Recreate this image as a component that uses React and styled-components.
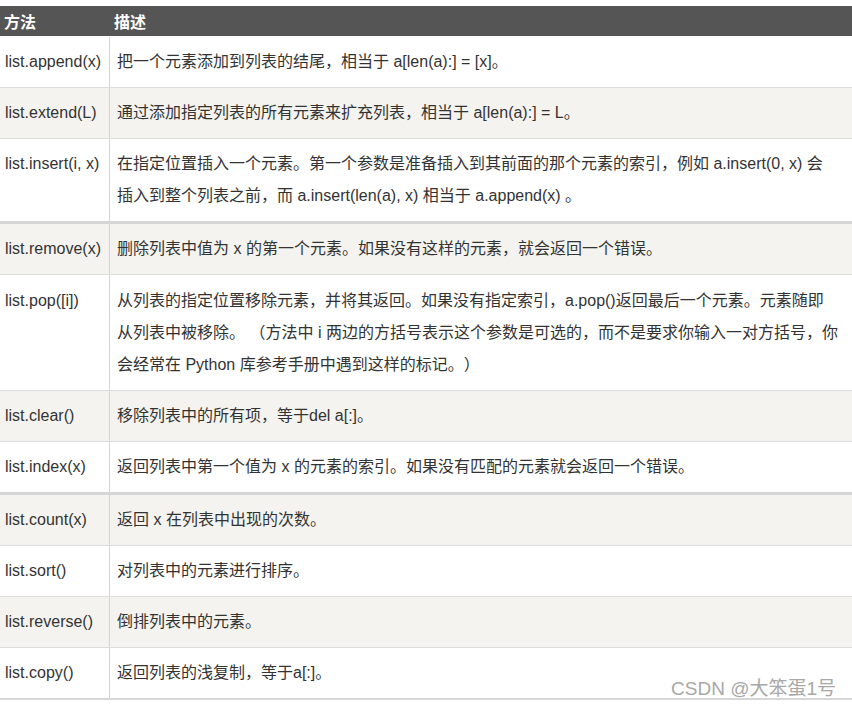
import React from "react";
import styled, { createGlobalStyle } from "styled-components";

const rows = [
  { name: "list.append(x)", lines: ["把一个元素添加到列表的结尾，相当于 a[len(a):] = [x]。"] },
  { name: "list.extend(L)", lines: ["通过添加指定列表的所有元素来扩充列表，相当于 a[len(a):] = L。"] },
  {
    name: "list.insert(i, x)",
    lines: [
      "在指定位置插入一个元素。第一个参数是准备插入到其前面的那个元素的索引，例如 a.insert(0, x) 会",
      "插入到整个列表之前，而 a.insert(len(a), x) 相当于 a.append(x) 。",
    ],
    thick: true,
  },
  { name: "list.remove(x)", lines: ["删除列表中值为 x 的第一个元素。如果没有这样的元素，就会返回一个错误。"] },
  {
    name: "list.pop([i])",
    lines: [
      "从列表的指定位置移除元素，并将其返回。如果没有指定索引，a.pop()返回最后一个元素。元素随即",
      "从列表中被移除。 （方法中 i 两边的方括号表示这个参数是可选的，而不是要求你输入一对方括号，你",
      "会经常在 Python 库参考手册中遇到这样的标记。）",
    ],
    tall: true,
  },
  { name: "list.clear()", lines: ["移除列表中的所有项，等于del a[:]。"] },
  { name: "list.index(x)", lines: ["返回列表中第一个值为 x 的元素的索引。如果没有匹配的元素就会返回一个错误。"], thick: true },
  { name: "list.count(x)", lines: ["返回 x 在列表中出现的次数。"] },
  { name: "list.sort()", lines: ["对列表中的元素进行排序。"] },
  { name: "list.reverse()", lines: ["倒排列表中的元素。"] },
  { name: "list.copy()", lines: ["返回列表的浅复制，等于a[:]。"], last: true },
];

const App = () => {
  return (
    <>
      <GlobalStyle />
      <Page>
        <Table>
          <Header>
            <HeadCell>方法</HeadCell>
            <HeadCell>描述</HeadCell>
          </Header>
          {rows.map((row, i) => (
            <Row key={row.name} $striped={i % 2 === 1} $thick={row.thick} $last={row.last}>
              <NameCell $tall={row.tall}>{row.name}</NameCell>
              <DescCell $tall={row.tall}>
                {row.lines.map(line => (
                  <Line key={line}>{line}</Line>
                ))}
              </DescCell>
            </Row>
          ))}
        </Table>
        <Watermark>CSDN @大笨蛋1号</Watermark>
      </Page>
    </>
  );
};

const GlobalStyle = createGlobalStyle`
  html, body {
    margin: 0;
    padding: 0;
    background: #fff;
  }
  body {
    font-family: "Liberation Sans", "Noto Sans CJK SC", sans-serif;
    text-spacing-trim: space-all;
  }
`;

const Page = styled.div`
  position: relative;
  width: 852px;
  height: 708px;
  padding-top: 6px;
  box-sizing: border-box;
  overflow: hidden;
`;

const Table = styled.div`
  display: flex;
  flex-direction: column;
`;

const Header = styled.div`
  display: grid;
  grid-template-columns: 110px 1fr;
  height: 30px;
  margin-bottom: 1px;
  background: #555555;
  align-items: center;
`;

const HeadCell = styled.div`
  color: #fff;
  font-size: 16px;
  font-weight: bold;
  padding-left: 4px;
`;

const Row = styled.div`
  display: grid;
  grid-template-columns: 110px 1fr;
  background: ${props => (props.$striped ? "#f4f3ef" : "#fff")};
  border-bottom: ${props => (props.$thick ? "3px" : props.$last ? "2px" : "1px")} solid
    ${props => (props.$thick || props.$last ? "#d6d6d6" : "#dcdcdc")};
  color: #333;
  font-size: 16px;
`;

const NameCell = styled.div`
  padding: ${props => (props.$tall ? "10px 0 9px 5px" : "9px 0 9px 5px")};
  line-height: 32px;
  border-right: 1px solid #d4d4d4;
  white-space: nowrap;
`;

const DescCell = styled.div`
  padding: ${props => (props.$tall ? "10px 0 9px 7px" : "9px 0 9px 7px")};
  line-height: 32px;
`;

const Line = styled.div`
  white-space: nowrap;
`;

const Watermark = styled.div`
  position: absolute;
  right: 16px;
  bottom: 8px;
  font-size: 19px;
  color: #a8a8a8;
  text-shadow: 0 0 1px #fff;
`;

export default App;
